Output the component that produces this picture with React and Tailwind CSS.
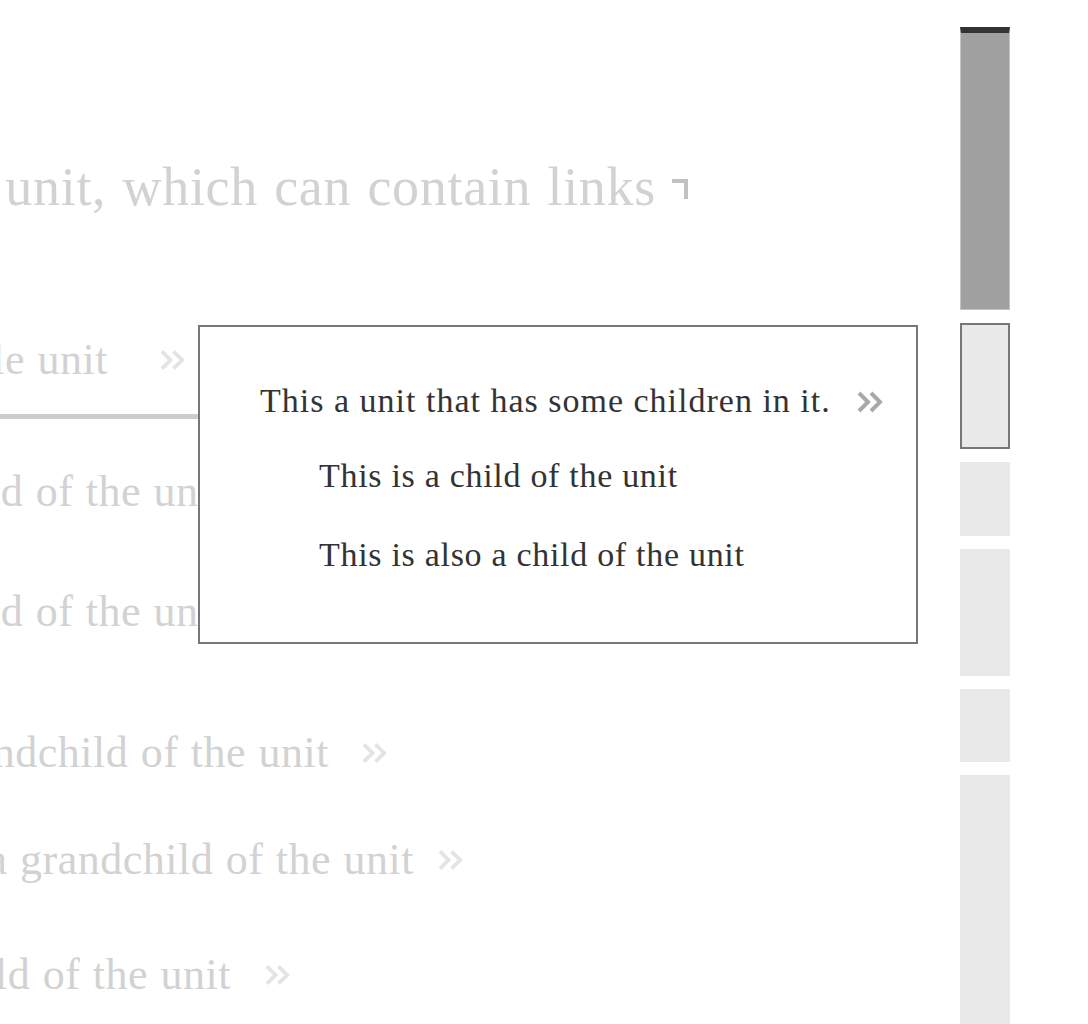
import React from "react";

const Chevrons = ({ className }) => (
  <svg viewBox="0 0 26 22" className={className} fill="none" stroke="currentColor" strokeWidth="4" strokeLinejoin="miter">
    <path d="M2 2 L11 11 L2 20" />
    <path d="M14 2 L23 11 L14 20" />
  </svg>
);

const LinkMark = () => (
  <svg viewBox="0 0 16 20" className="w-[16px] h-[20px] text-[#c2c2c2]" fill="currentColor">
    <rect x="0" y="0" width="16" height="4" />
    <rect x="12" y="0" width="4" height="20" />
  </svg>
);

// one faded row of the page behind the popup, cut by the left edge
const Row = ({ text, width, gap, mt, chevron = true }) => (
  <div
    className={`flex justify-end items-center whitespace-nowrap h-[44px] text-[44px] leading-none tracking-[0.5px] [word-spacing:1px] text-[#d2d2d2] ${mt}`}
    style={{ width }}
  >
    <span>{text}</span>
    {chevron && <Chevrons className={`w-[25px] h-[22px] shrink-0 text-[#e4e4e4] ${gap}`} />}
  </div>
);

const minimap = [
  { h: "h-[283px]", cls: "bg-[#a0a0a0] border border-[#c4c4c4] border-t-[6px] border-t-[#333]" },
  { h: "h-[126px]", cls: "bg-[#e9e9e9] border-2 border-[#777]" },
  { h: "h-[74px]", cls: "bg-[#e9e9e9]" },
  { h: "h-[127px]", cls: "bg-[#e9e9e9]" },
  { h: "h-[73px]", cls: "bg-[#e9e9e9]" },
  { h: "h-[260px]", cls: "bg-[#e9e9e9]" },
];

export default function App() {
  return (
    <div className="flex h-[1024px] overflow-hidden bg-white font-['Liberation_Serif','Times_New_Roman',serif]">
      <div className="relative flex-1 overflow-hidden">
        <div className="flex flex-col">
          {/* heading */}
          <div className="mt-[160px] w-[688px] flex justify-end items-center whitespace-nowrap h-[54px] text-[54px] leading-none tracking-[0.7px] [word-spacing:2px] text-[#d2d2d2]">
            <span>This is a unit, which can contain links</span>
            <span className="ml-[16px] mt-[4px] shrink-0 flex">
              <LinkMark />
            </span>
          </div>

          {/* selected row with underline */}
          <div className="mt-[124px] w-[700px] pb-[32px] border-b-[5px] border-[#cccccc]">
            <Row text="This is the sample unit" width={185} gap="ml-[52px]" mt="" />
          </div>

          <Row text="This is a child of the unit" width={284} gap="ml-[35px]" mt="mt-[51px]" />
          <Row text="This is also a child of the unit" width={284} gap="ml-[35px]" mt="mt-[76px]" />
          <Row text="This is a grandchild of the unit" width={387} gap="ml-[33px]" mt="mt-[97px]" />
          <Row text="This is also a grandchild of the unit" width={463} gap="ml-[24px]" mt="mt-[63px]" />
          <Row text="This is a child of the unit" width={290} gap="ml-[34px]" mt="mt-[71px]" />
        </div>

        {/* focused unit popup */}
        <div className="absolute left-[198px] top-[325px] w-[720px] h-[319px] bg-white border-2 border-[#777] text-[#333] text-[34px] leading-none tracking-[0.7px]">
          <div className="pt-[57px] pl-[60px] pr-[32px] flex items-center justify-between whitespace-nowrap h-[91px]">
            <span className="h-[34px] flex items-center tracking-[1px]">This a unit that has some children in it.</span>
            <Chevrons className="w-[28px] h-[22px] shrink-0 text-[#a9a9a9] mt-[2px]" />
          </div>
          <div className="pl-[119px] flex flex-col">
            <div className="mt-[41px] h-[34px] whitespace-nowrap">This is a child of the unit</div>
            <div className="mt-[45px] h-[34px] whitespace-nowrap">This is also a child of the unit</div>
          </div>
        </div>
      </div>

      {/* minimap */}
      <div className="w-[50px] mr-[78px] pt-[27px] flex flex-col gap-[13px] shrink-0">
        {minimap.map((b, i) => (
          <div key={i} className={`${b.h} ${b.cls} shrink-0`} />
        ))}
      </div>
    </div>
  );
}
